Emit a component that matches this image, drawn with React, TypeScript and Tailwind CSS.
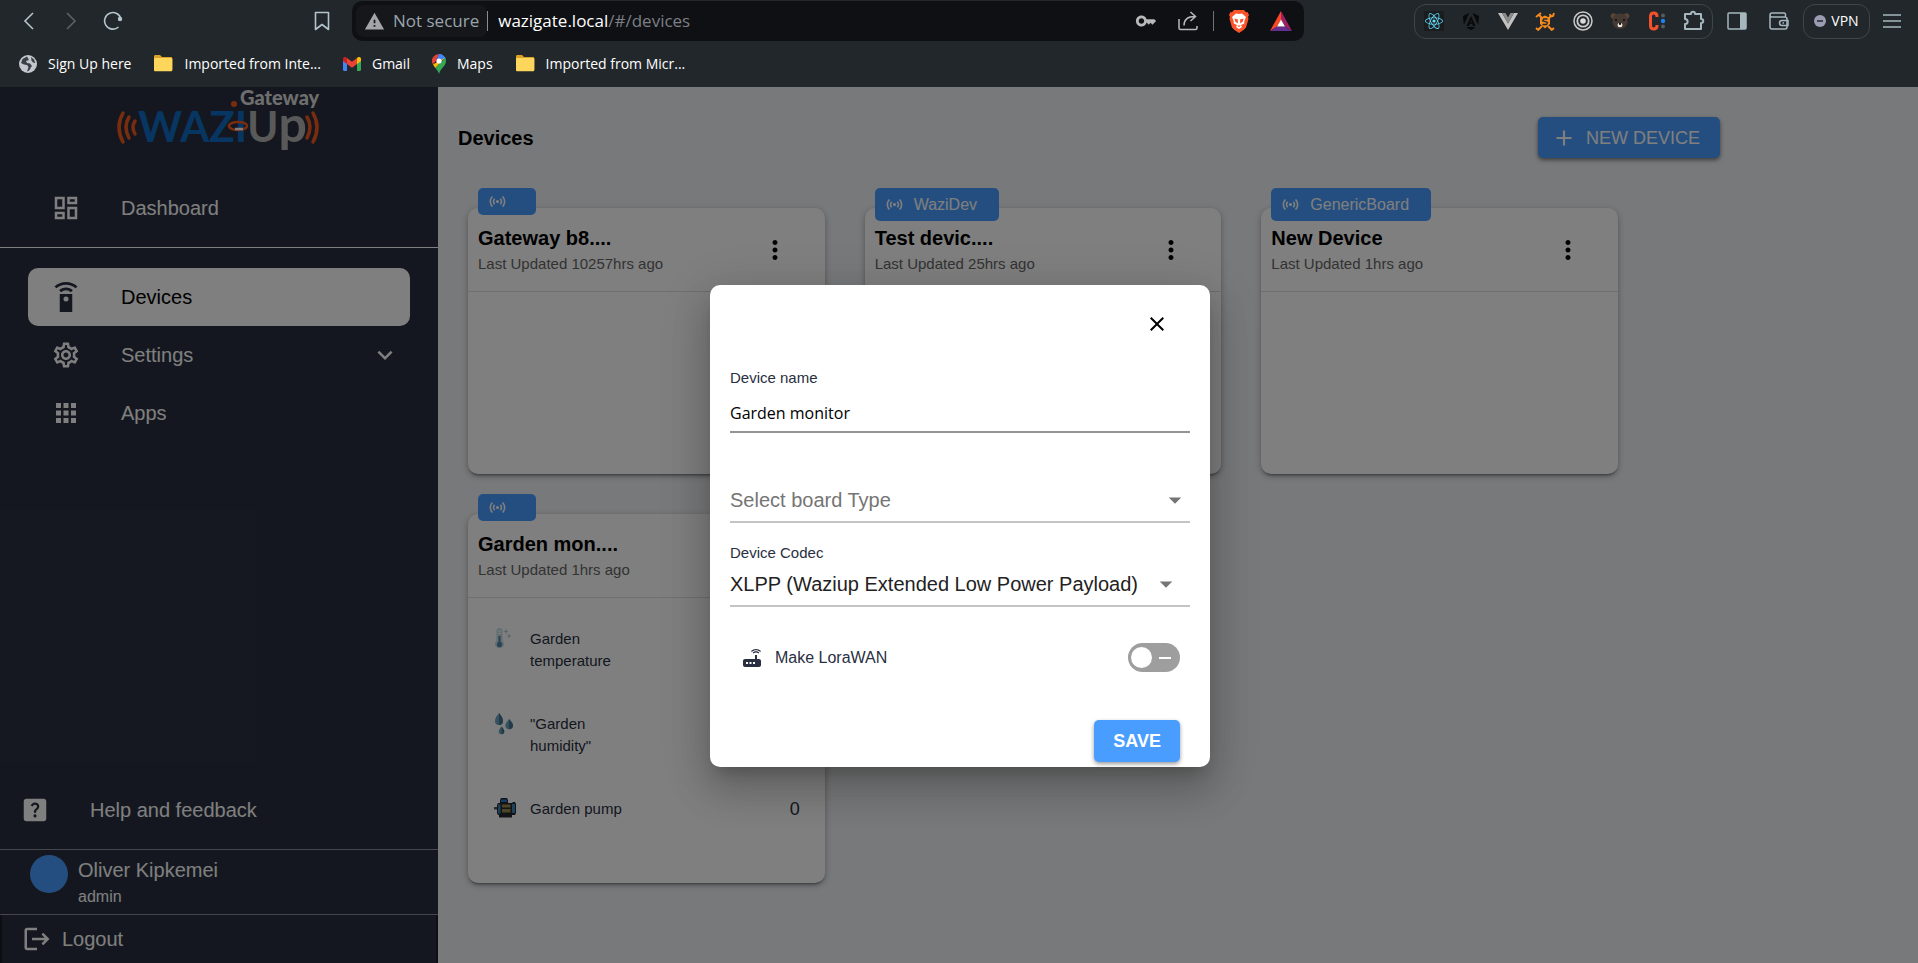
import React, { useState } from "react";
import type { ReactNode } from "react";
import {
  MdAdd,
  MdApps,
  MdArrowDropDown,
  MdClose,
  MdExpandMore,
  MdHelpCenter,
  MdKey,
  MdLogout,
  MdMoreVert,
  MdOutlineDashboard,
  MdOutlineSettings,
  MdRouter,
  MdSensors,
  MdWarning,
} from "react-icons/md";
import { FaReact } from "react-icons/fa";

/* ---------- Browser toolbar ---------- */

function IconButton({ label, className = "", children }: { label: string; className?: string; children: ReactNode }) {
  return (
    <button type="button" aria-label={label} className={`flex shrink-0 items-center justify-center ${className}`}>
      {children}
    </button>
  );
}

function FolderIcon() {
  return (
    <svg width="20" height="17" viewBox="0 0 20 17" aria-hidden="true">
      <path d="M1 1.500C1 .7 1.500 0 2.300 0H7l2 2h9c.8 0 1.300.7 1.300 1.500V14c0 .8-.5 1.500-1.300 1.500H2.300C1.500 15.500 1 14.800 1 14z" fill="#dba227" />
      <path d="M1 4.300C1 3.500 1.500 3 2.300 3H18c.8 0 1.300.5 1.300 1.300V15c0 .8-.5 1.300-1.300 1.300H2.300C1.500 16.300 1 15.800 1 15z" fill="#ffd65c" />
    </svg>
  );
}

function GlobeIcon() {
  return (
    <svg width="18" height="18" viewBox="0 0 18 18" aria-hidden="true">
      <circle cx="9" cy="9" r="9" fill="#c4c7cc" />
      <path d="M8 1.500 3.500 4 2 8l3 1.500 3 .5 1.500 2L8 16.500c2-.2 3-1.800 3.500-3.500L13 11l-2-2.500-3-.5-1-2 3-1z" fill="#3a4047" />
      <path d="m12 2 3 2.500 1.300 3.500-2.300-.5-1.500-2z" fill="#3a4047" />
    </svg>
  );
}

function GmailIcon() {
  return (
    <svg width="18" height="14" viewBox="0 0 18 14" aria-hidden="true">
      <path d="M0 2v10.800c0 .7.5 1.200 1.200 1.200H4V5z" fill="#4285f4" />
      <path d="M18 2v10.800c0 .7-.5 1.200-1.200 1.200H14V5z" fill="#34a853" />
      <path d="M4 1v6L0 4V2C0 .2 2-.7 3.300.4z" fill="#c5221f" />
      <path d="M14 1v6l4-3V2c0-1.800-2-2.700-3.300-1.600z" fill="#fbbc04" />
      <path d="M4 1v6l5 3.800L14 7V1L9 4.800z" fill="#ea4335" />
    </svg>
  );
}

function MapsIcon() {
  return (
    <svg width="14" height="20" viewBox="0 0 14 20" aria-hidden="true">
      <path d="M7 0a7 7 0 0 0-5.400 2.500L4.900 5.300z" fill="#ea4335" />
      <path d="M7 0C10.300 0 13 2.200 13.800 5L9 6z" fill="#4285f4" />
      <path d="M7 0 4.500 5.800 9 5l1-4.400C9 .2 8 0 7 0z" fill="#4285f4" />
      <path d="M1.600 2.500A7 7 0 0 0 1 10.500L5 5.400z" fill="#ea4335" />
      <path d="M1 10.500c.6 1.200 1.500 2.200 2.400 3.400L13 3.500 9 6z" fill="#fbbc04" />
      <path d="M13.300 4c1.200 2.700.7 5-.5 7C11.500 13 8.500 15 7 20c-.8-2.500-2-4.200-3.600-6.100z" fill="#34a853" />
      <circle cx="7" cy="7" r="2.600" fill="#fff" />
    </svg>
  );
}

const bookmarks: { label: string; icon: ReactNode }[] = [
  { label: "Sign Up here", icon: <GlobeIcon /> },
  { label: "Imported from Inte...", icon: <FolderIcon /> },
  { label: "Gmail", icon: <GmailIcon /> },
  { label: "Maps", icon: <MapsIcon /> },
  { label: "Imported from Micr...", icon: <FolderIcon /> },
];

function BrowserBar() {
  return (
    <header className="shrink-0 bg-[#22272b] font-['Open_Sans','Noto_Sans',sans-serif] text-white">
      <div className="flex h-[42px] items-center">
        <nav aria-label="History" className="flex w-[352px] items-center pl-[17px] pr-[18px] text-[#b4c4cc]">
          <IconButton label="Back" className="h-6 w-6">
            <svg width="12" height="18" viewBox="0 0 12 18" fill="none" stroke="currentColor" strokeWidth="1.600"><path d="M10 1 2 9l8 8" /></svg>
          </IconButton>
          <IconButton label="Forward" className="ml-[18px] h-6 w-6 text-[#59636a]">
            <svg width="12" height="18" viewBox="0 0 12 18" fill="none" stroke="currentColor" strokeWidth="1.600"><path d="m2 1 8 8-8 8" /></svg>
          </IconButton>
          <IconButton label="Reload" className="ml-[18px] h-6 w-6">
            <svg width="20" height="20" viewBox="0 0 20 20" fill="none" stroke="currentColor" strokeWidth="1.600">
              <path d="M15.500 16A8.300 8.300 0 1 1 18 8" />
              <circle cx="17" cy="8" r="2.200" fill="currentColor" stroke="none" />
            </svg>
          </IconButton>
          <IconButton label="Bookmark this page" className="ml-auto h-6 w-6">
            <svg width="16" height="20" viewBox="0 0 16 20" fill="none" stroke="currentColor" strokeWidth="1.600" strokeLinejoin="round"><path d="M1.500 1.500h13v17L8 13.500l-6.500 5z" /></svg>
          </IconButton>
        </nav>

        <div className="flex h-10 w-[952px] items-center rounded-[10px] bg-[#0f1014] pl-1 pr-[2px]">
          <button type="button" className="flex h-8 items-center gap-2 rounded-lg bg-[#15171b] px-2 text-[17px] text-[#9aa5ab]">
            <MdWarning className="size-[21px] text-[#a3a5a8]" />
            Not secure
          </button>
          <span className="h-5 w-px bg-[#8a8c8f]" />
          <p className="ml-[10px] text-[17px] text-[#7b7f85]">
            <span className="text-white">wazigate.local</span>/#/devices
          </p>
          <div className="ml-auto flex items-center">
            <IconButton label="Passwords" className="h-6 w-[42px] text-[#b9b9ba]"><MdKey className="size-[22px]" /></IconButton>
            <IconButton label="Share" className="h-6 w-[42px] text-[#b9b9ba]">
              <svg width="20" height="20" viewBox="0 0 20 20" fill="none" stroke="currentColor" strokeWidth="1.500">
                <path d="M1 8v9c0 1 .6 1.500 1.500 1.500h15c.9 0 1.500-.5 1.500-1.500v-2" />
                <path d="M6 14.500C6 8.500 9.500 5.500 17 5.500M12.500 1l5 4.500-5 4.500" />
              </svg>
            </IconButton>
            <span className="mx-1 h-5 w-px bg-[#707276]" />
            <IconButton label="Shields" className="h-6 w-[42px]">
              <svg width="20" height="23" viewBox="0 0 20 23">
                <path d="M5 0h10l2 2.200 1.500-.2 1.500 3-1 2 .5 2-2.500 8.500-2.500 2.500L10 23l-4.500-3L3 17.500.5 9 1 7 0 5l1.500-3 1.500.2z" fill="#fb542b" />
                <path d="M10 4 7 3.500 3 7l1.500 3.500.3 3L8 15l-1 2 3 2 3-2-1-2 3.200-1.500.3-3L17 7l-4-3.500z" fill="#fff" />
                <path d="M5.500 8.500 9 9.500l-.3 4-2.500-2zM14.500 8.500 11 9.500l.3 4 2.500-2zM8 15.500h4L10 17z" fill="#fb542b" />
              </svg>
            </IconButton>
            <IconButton label="Rewards" className="h-6 w-[42px]">
              <svg width="22" height="20" viewBox="0 0 22 20">
                <path d="M11 0 0 20l7-4.500 4-7z" fill="#ff4724" />
                <path d="M11 0v8.500l4 7 7 4.500z" fill="#9e1f63" />
                <path d="M0 20h22l-7-4.500H7z" fill="#662d91" />
                <path d="m11 8.500 4 7H7z" fill="#fff" />
              </svg>
            </IconButton>
          </div>
        </div>

        <div className="ml-auto flex items-center text-[#a5b6be]">
          <div className="flex h-[35px] items-center rounded-xl border border-[#3d464b]">
            <IconButton label="React tools" className="h-8 w-[37px]">
              <span className="flex size-5 items-center justify-center bg-[#1a1c1e]"><FaReact className="size-[18px] text-[#61dafb]" /></span>
            </IconButton>
            <IconButton label="Angular tools" className="h-8 w-[37px]">
              <svg width="16" height="17" viewBox="0 0 16 17" fill="#07090a"><path d="M9.800 0 16 3l-.8 9zM6.200 0 .8 12 0 3zM8 3l4.500 10H10l-.9-2.200H6.900L6 13H3.500zm0 3.400L7.300 9.200h1.400zM4 14h8l-.6 1.300L8 17l-3.400-1.700z" /></svg>
            </IconButton>
            <IconButton label="Vue tools" className="h-8 w-[37px]">
              <svg width="20" height="17" viewBox="0 0 20 17"><path d="M0 0h4l6 10.500L16 0h4L10 17z" fill="#c2c2c2" /><path d="M4 0h3.500L10 4.400 12.500 0H16l-6 10.500z" fill="#8b8b8b" /></svg>
            </IconButton>
            <IconButton label="Wallet tools" className="h-8 w-[38px]">
              <svg width="20" height="19" viewBox="0 0 20 19" fill="none" stroke="#f58a1f">
                <path d="m1 5 5-4M4 3l3 3M19 1l-1 3-2.500.5L15 2M15.500 4.500 13.500 6.500M3 18l4-4M17 18l-4-4M1 16l3 2.500M19 16l-3 2.500" strokeWidth="2" />
                <path d="m10 3.500 5 2.500v6l-5 4.500L5 12V6z" fill="#f58a1f" stroke="none" />
                <path d="M12.500 7H8.700L7.700 8.800l4.800 1.700-.9 2H7.500" stroke="#22272b" strokeWidth="1.300" />
              </svg>
            </IconButton>
            <IconButton label="Target" className="h-8 w-[37px]">
              <svg width="20" height="20" viewBox="0 0 20 20" fill="none" stroke="#c9c9c9"><circle cx="10" cy="10" r="9" strokeWidth="1.500" /><circle cx="10" cy="10" r="5.700" strokeWidth="1.800" /><circle cx="10" cy="10" r="2.800" fill="#dadada" stroke="none" /></svg>
            </IconButton>
            <IconButton label="Bear" className="h-8 w-[37px]">
              <svg width="20" height="18" viewBox="0 0 20 18">
                <circle cx="3.500" cy="4" r="2.800" fill="#5a4637" /><circle cx="16.500" cy="4" r="2.800" fill="#5a4637" />
                <path d="M10 1.500c5 0 7.500 3.500 7.500 8S14 17 10 17s-7.500-3-7.500-7.500 2.500-8 7.500-8z" fill="#443a33" />
                <circle cx="6" cy="8" r="1" fill="#0d0d0d" /><circle cx="14" cy="8" r="1" fill="#0d0d0d" />
                <ellipse cx="10" cy="13" rx="2.500" ry="2.200" fill="#efe9e2" /><circle cx="10" cy="11.800" r="1.200" fill="#111" />
              </svg>
            </IconButton>
            <IconButton label="Cookie tools" className="h-8 w-[37px]">
              <svg width="18" height="20" viewBox="0 0 18 20">
                <path d="M9 6V5.500C9 3.500 8 2 5.800 2S2.500 3.500 2.500 5.500v9c0 2 1.100 3.500 3.300 3.500S9 16.500 9 14.500V14" fill="none" stroke="#f4512c" strokeWidth="3" />
                <circle cx="15" cy="4.500" r="2" fill="#555b60" /><circle cx="15" cy="10" r="2.200" fill="#1a83f0" /><circle cx="15" cy="15.500" r="2" fill="#555b60" />
              </svg>
            </IconButton>
            <IconButton label="Extensions" className="h-8 w-[37px]">
              <svg width="22" height="22" viewBox="0 0 22 22" fill="none" stroke="currentColor" strokeWidth="2" strokeLinejoin="round">
                <path d="M2 4h6c0-3 4-3 4 0h6v5c3 0 3 4 0 4v6H2v-5c3.500 0 3.500-5 0-5z" />
              </svg>
            </IconButton>
          </div>
          <IconButton label="Side panel" className="ml-3 h-8 w-6">
            <svg width="20" height="18" viewBox="0 0 20 18"><rect x="1" y="1" width="18" height="16" rx="1" fill="none" stroke="currentColor" strokeWidth="1.500" /><path d="M13 1h6v16h-6z" fill="currentColor" /></svg>
          </IconButton>
          <IconButton label="Wallet" className="ml-[18px] h-8 w-6">
            <svg width="20" height="18" viewBox="0 0 20 18" fill="none" stroke="currentColor" strokeWidth="1.500"><path d="M1 3v12c0 1 .8 2 2 2h13c1.200 0 2-1 2-2V7c0-1-.8-2-2-2H3C1.800 5 1 4 1 3s.8-2 2-2h12c1 0 1.500.8 1.500 1.500V5" /><path d="M19 8.500h-6c-1.500 0-2.500 1-2.500 2.500s1 2.500 2.500 2.500h6z" /><path d="M13.500 11h1.500" /></svg>
          </IconButton>
          <button type="button" className="ml-3 flex h-[35px] w-[67px] items-center justify-center gap-[5px] rounded-xl border border-[#3d464b] text-sm text-white">
            <svg width="12" height="12" viewBox="0 0 12 12" aria-hidden="true"><circle cx="6" cy="6" r="6" fill="#9c9bb4" /><path d="M3 6h6" stroke="#22272b" strokeWidth="1.500" /></svg>
            VPN
          </button>
          <IconButton label="Menu" className="ml-3 mr-4 h-8 w-5">
            <svg width="18" height="14" viewBox="0 0 18 14" stroke="currentColor" strokeWidth="1.500"><path d="M0 1h18M0 7h18M0 13h18" /></svg>
          </IconButton>
        </div>
      </div>
      <nav aria-label="Bookmarks" className="flex h-[45px] items-center gap-[22px] pl-[19px] pb-[2px] text-sm">
        {bookmarks.map((b) => (
          <a key={b.label} href="#" className="flex items-center gap-[11px]">
            {b.icon}
            {b.label}
          </a>
        ))}
      </nav>
    </header>
  );
}

/* ---------- Sidebar ---------- */

function Logo() {
  return (
    <svg width="206" height="66" viewBox="0 0 206 66" className="mx-auto block shrink-0 overflow-visible" role="img" aria-label="Waziup Gateway">
      <g fill="none" stroke="#f35a1c" strokeWidth="3.500" strokeLinecap="round">
        <path d="M7 26q-8 14 0 29M13 30q-6 10 0 21M19 34q-4 6 0 13" />
        <path d="M197 26q8 14 0 29M191 30q6 10 0 21M185 34q4 6 0 13" />
      </g>
      <g fontFamily="Lato, sans-serif" fontWeight="700">
        <text x="22" y="55" fontSize="42" fill="#0f6cc4">
          WAZI<tspan fill="#b3b3b3">U</tspan><tspan fill="#b3b3b3" fontSize="50">p</tspan>
        </text>
        <text x="124" y="18" fontSize="20" fontWeight="900" fill="#dcdcdc">Gateway</text>
      </g>
      <circle cx="118" cy="17" r="3" fill="#f35a1c" />
      <ellipse cx="122" cy="39" rx="9" ry="4" fill="none" stroke="#f35a1c" strokeWidth="2.500" />
      <path d="M119 42h8" stroke="#fff" strokeWidth="2.500" />
    </svg>
  );
}

function RemoteIcon() {
  return (
    <svg viewBox="0 0 24 24" fill="currentColor" className="size-[30px] text-[#292f3f]" aria-hidden="true">
      <path d="M17 9.500H7V24h10V9.500zM12 15.500a2 2 0 1 1 0-4 2 2 0 0 1 0 4zM6.500 6.600l1.700 1.500a5.400 5.400 0 0 1 7.600 0l1.700-1.500C16 5.200 14.100 4.400 12 4.400s-4 .8-5.500 2.200zM12 0C8.500 0 5.200 1.300 2.800 3.500l1.600 1.500C6.400 3.200 9 2.100 12 2.100s5.600 1.100 7.600 2.900l1.600-1.500C18.800 1.300 15.500 0 12 0z" />
    </svg>
  );
}

function NavItem({ icon, label, active, trailing }: { icon: ReactNode; label: string; active?: boolean; trailing?: ReactNode }) {
  return (
    <a
      href="#"
      aria-current={active ? "page" : undefined}
      className={`flex h-[58px] items-center rounded-[10px] pl-[23px] pr-[10px] ${active ? "bg-white text-black" : ""}`}
    >
      <span className="flex w-[70px]">{icon}</span>
      <span>{label}</span>
      {trailing}
    </a>
  );
}

function Sidebar() {
  return (
    <aside className="flex w-[438px] shrink-0 flex-col bg-[#292f3f] text-xl text-white">
      <Logo />
      <nav aria-label="Main" className="flex flex-1 flex-col">
        <div className="border-b border-white px-7 pb-[10px] pt-[26px]">
          <NavItem icon={<MdOutlineDashboard className="size-[30px]" />} label="Dashboard" />
        </div>
        <div className="px-7 pt-5">
          <NavItem active icon={<RemoteIcon />} label="Devices" />
          <NavItem icon={<MdOutlineSettings className="size-[30px]" />} label="Settings" trailing={<MdExpandMore className="ml-auto size-[30px]" />} />
          <NavItem icon={<MdApps className="size-[30px]" />} label="Apps" />
        </div>
        <a href="#" className="mt-auto flex h-20 items-center gap-10 border-b border-[#8b8f99] pl-5">
          <MdHelpCenter className="size-[30px]" />
          Help and feedback
        </a>
      </nav>
      <div className="flex h-[65px] items-start gap-[10px] border-b border-[#8b8f99] pl-[30px] pt-[5px]">
        <span className="size-[38px] rounded-full bg-[#499dff]" />
        <p className="leading-[30px]">
          Oliver Kipkemei
          <span className="block text-base leading-6">admin</span>
        </p>
      </div>
      <button type="button" className="flex h-12 items-center gap-[10px] border-x-2 border-black/40 pl-5">
        <MdLogout className="size-[30px]" />
        Logout
      </button>
    </aside>
  );
}

/* ---------- Device cards ---------- */

function ThermometerIcon() {
  return (
    <svg width="18" height="22" viewBox="0 0 18 22" aria-hidden="true">
      <path d="M2.500 3a3 3 0 0 1 6 0v9.500a4.500 4.500 0 1 1-6 0z" fill="#c6dce8" />
      <path d="M4.500 8h2v6a2.700 2.700 0 1 1-2 0z" fill="#4d88a5" />
      <path d="M4 3h3M4 5.500h3" stroke="#fff" strokeWidth="1" />
      <path d="M12 1v5M9.800 3.500h4.400M15 6v4M13 8h4" stroke="#b4cad6" strokeWidth="1" />
    </svg>
  );
}

function DropsIcon() {
  return (
    <svg width="20" height="22" viewBox="0 0 20 22" aria-hidden="true">
      <g fill="#6aa5c2">
        <path d="M5 0c2 2.500 4 5 4 8a4 4 0 1 1-8 0c0-3 2-5.500 4-8z" />
        <path d="M15 6c2 2.300 4 4 4 6.500a3.800 3.800 0 1 1-7.600 0C11.400 10 13.500 8.300 15 6z" />
        <path d="M7.500 13.500c1.500 1.800 2.800 3 2.800 5a2.800 2.800 0 1 1-5.600 0c0-2 1.300-3.200 2.800-5z" />
      </g>
      <path d="M5 0c2 2.500 4 5 4 8a4 4 0 0 1-4 4zM15 6c2 2.300 4 4 4 6.500a3.800 3.800 0 0 1-4 3.800zM7.500 13.500c1.500 1.800 2.800 3 2.800 5a2.800 2.800 0 0 1-2.800 2.800z" fill="#467690" />
    </svg>
  );
}

function PumpIcon() {
  return (
    <svg width="22" height="20" viewBox="0 0 22 20" aria-hidden="true">
      <path d="M7 0h6l1 2v3H6V2zM5 17h13v2.500H5z" fill="#23262e" />
      <path d="M7 1.500h6v2.500H7z" fill="#2f74c9" />
      <path d="M4 5h14l1-1h2l1 2v9l-1 2H4L3 15V7z" fill="#23262e" />
      <path d="M4 6.500h2.500v9H4zM18 6h3v9h-3z" fill="#3c86b8" />
      <path d="M8 6.500h8.500v3H8zM8 11h8.500v3.500H8z" fill="#9c8a4c" />
      <path d="M0 9h3v2.500H0z" fill="#555" />
    </svg>
  );
}

interface Reading {
  icon: ReactNode;
  label: string;
  value?: string;
}

interface Device {
  board?: string;
  name: string;
  updated: string;
  readings?: Reading[];
}

const devices: Device[] = [
  { name: "Gateway b8....", updated: "Last Updated 10257hrs ago" },
  { board: "WaziDev", name: "Test devic....", updated: "Last Updated 25hrs ago" },
  { board: "GenericBoard", name: "New Device", updated: "Last Updated 1hrs ago" },
  {
    name: "Garden mon....",
    updated: "Last Updated 1hrs ago",
    readings: [
      { icon: <ThermometerIcon />, label: "Garden temperature" },
      { icon: <DropsIcon />, label: "\"Garden humidity\"" },
      { icon: <PumpIcon />, label: "Garden pump", value: "0" },
    ],
  },
];

function DeviceCard({ device }: { device: Device }) {
  return (
    <article className="relative rounded-[10px] bg-white shadow-[0_3px_3px_-2px_rgba(0,0,0,0.4),0_2px_6px_0_rgba(0,0,0,0.3)]">
      <div
        className={`absolute -top-5 left-[10px] flex items-center gap-[10px] rounded-[5px] bg-[#499dff] px-[10px] text-base text-white ${
          device.board ? "h-[33px] pr-[22px]" : "h-[27px] w-[58px]"
        }`}
      >
        <MdSensors className="size-[19px]" />
        {device.board}
      </div>
      <header className="flex h-[84px] items-center justify-between border-b border-[#dedede] pl-[10px] pr-[35px]">
        <div>
          <h2 className="text-xl leading-7 font-bold text-black">{device.name}</h2>
          <p className="text-[15px] leading-6 text-[#666]">{device.updated}</p>
        </div>
        <button type="button" aria-label={`Actions for ${device.name}`} className="text-black">
          <MdMoreVert className="size-[30px]" />
        </button>
      </header>
      <ul className="min-h-[182px] text-[15px] leading-[22px] text-[#292f3f]">
        {device.readings?.map((r) => (
          <li key={r.label} className="flex items-start pl-[26px] pr-[25px] pt-[36px] pb-[5px] first:pt-[30px] last:pb-[63px]">
            <span className="flex w-[36px]">{r.icon}</span>
            <span className={r.value ? "" : "w-[90px]"}>{r.label}</span>
            {r.value && <span className="ml-auto text-lg leading-[22px]">{r.value}</span>}
          </li>
        ))}
      </ul>
    </article>
  );
}

/* ---------- Dialog ---------- */

function DeviceDialog() {
  const [name, setName] = useState("Garden monitor");
  const [lora, setLora] = useState(false);
  return (
    <div className="absolute inset-0 flex items-center justify-center bg-black/50 pt-[2px] pl-[2px]">
      <form
        role="dialog"
        aria-modal="true"
        aria-label="New device"
        onSubmit={(e) => e.preventDefault()}
        className="flex w-[500px] flex-col rounded-[10px] bg-white px-5 pb-[5px] text-[#292f3f] shadow-[0_11px_15px_-7px_rgba(0,0,0,0.2),0_24px_38px_3px_rgba(0,0,0,0.14),0_9px_46px_8px_rgba(0,0,0,0.12)]"
      >
        <button type="button" aria-label="Close" className="mt-[27px] mr-[21px] self-end text-black">
          <MdClose className="size-6" />
        </button>

        <label htmlFor="device-name" className="mt-8 text-[15px] leading-5">Device name</label>
        <input
          id="device-name"
          value={name}
          onChange={(e) => setName(e.target.value)}
          className="mt-[5px] h-10 w-full border-b-2 border-[#949494] pt-[2px] font-['Open_Sans','Noto_Sans',sans-serif] text-base text-black outline-none"
        />

        <label htmlFor="board-type" className="sr-only">Select board Type</label>
        <div className="mt-[45px] flex h-[45px] items-center border-b-2 border-[#c4c4c4]">
          <select id="board-type" className="min-w-0 flex-1 appearance-none bg-transparent text-xl text-[#757575] outline-none">
            <option>Select board Type</option>
          </select>
          <MdArrowDropDown className="size-[30px] text-[#757575]" />
        </div>

        <label htmlFor="codec" className="mt-5 text-[15px] leading-5">Device Codec</label>
        <div className="flex h-11 items-center border-b-2 border-[#c4c4c4] pr-[9px]">
          <select id="codec" className="min-w-0 flex-1 appearance-none bg-transparent text-xl text-[#222] outline-none">
            <option>XLPP (Waziup Extended Low Power Payload)</option>
          </select>
          <MdArrowDropDown className="size-[30px] text-[#757575]" />
        </div>

        <div className="mt-[36px] flex items-center px-[10px]">
          <MdRouter className="size-6" />
          <label htmlFor="lorawan" className="ml-[11px] text-base">Make LoraWAN</label>
          <span className="relative ml-auto flex h-[29px] w-[52px] items-center justify-between rounded-full bg-[#9e9e9e] px-[3px]">
            <input
              id="lorawan"
              type="checkbox"
              role="switch"
              checked={lora}
              onChange={(e) => setLora(e.target.checked)}
              className="absolute inset-0 size-full cursor-pointer opacity-0"
            />
            <span className={`size-[21px] rounded-full bg-white ${lora ? "order-2" : ""}`} />
            <span className="mx-[6px] h-[2px] w-3 bg-white" />
          </span>
        </div>

        <button
          type="submit"
          className="mt-[48px] mr-[10px] h-[42px] self-end rounded-[5px] bg-[#499dff] px-[19px] text-lg font-bold text-white shadow-[0_2px_4px_rgba(0,0,0,0.4)]"
        >
          SAVE
        </button>
      </form>
    </div>
  );
}

/* ---------- Page ---------- */

export default function App() {
  return (
    <div className="flex min-h-screen flex-col font-['Liberation_Sans',Arial,sans-serif]">
      <BrowserBar />
      <div className="relative flex flex-1">
        <Sidebar />
        <main className="flex-1 bg-[#f0f2f5] px-5 pt-[30px]">
          <div className="flex max-w-[1262px] items-center justify-between">
            <h1 className="text-xl font-bold text-black">Devices</h1>
            <button type="button" className="flex h-[41px] items-center gap-[9px] rounded-[5px] bg-[#499dff] pl-[13px] pr-5 text-lg text-white shadow-[0_2px_4px_rgba(0,0,0,0.5)]">
              <MdAdd className="size-[26px]" />
              NEW DEVICE
            </button>
          </div>
          <section aria-label="Device list" className="mt-[50px] ml-[10px] grid max-w-[1150px] grid-cols-3 items-start gap-10">
            {devices.map((d) => (
              <DeviceCard key={d.name} device={d} />
            ))}
          </section>
        </main>
        <DeviceDialog />
      </div>
    </div>
  );
}
